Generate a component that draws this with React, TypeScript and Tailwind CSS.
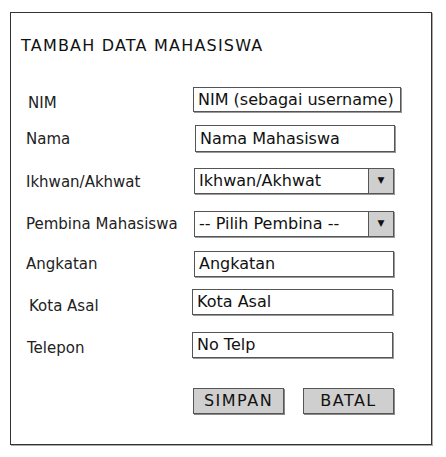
const font = "font-['Comic_Sans_MS','DejaVu_Sans',sans-serif]";

type Row = {
  label: string;
  value: string;
  labelX: number;
  inputX: number;
  inputW: number;
  dy: number;
  mt: number;
  h: number;
  select?: boolean;
};

const rows: Row[] = [
  { label: "NIM", value: "NIM (sebagai username)", labelX: 17, inputX: 182, inputW: 208, dy: 4, mt: 29, h: 25 },
  { label: "Nama", value: "Nama Mahasiswa", labelX: 15, inputX: 184, inputW: 200, dy: 1, mt: 13, h: 27 },
  { label: "Ikhwan/Akhwat", value: "Ikhwan/Akhwat", labelX: 15, inputX: 183, inputW: 200, dy: 1, mt: 16, h: 26, select: true },
  { label: "Pembina Mahasiswa", value: "-- Pilih Pembina --", labelX: 15, inputX: 183, inputW: 200, dy: 0, mt: 17, h: 26, select: true },
  { label: "Angkatan", value: "Angkatan", labelX: 15, inputX: 183, inputW: 200, dy: 0, mt: 14, h: 26 },
  { label: "Kota Asal", value: "Kota Asal", labelX: 18, inputX: 181, inputW: 201, dy: 4, mt: 12, h: 26 },
  { label: "Telepon", value: "No Telp", labelX: 16, inputX: 181, inputW: 201, dy: 3, mt: 17, h: 26 },
];

function FormRow({ row }: { row: Row }) {
  return (
    <div className="flex items-center" style={{ marginTop: row.mt, height: row.h }}>
      <div
        className="shrink-0 text-[15px] text-[#222] whitespace-nowrap"
        style={{ paddingLeft: row.labelX, width: row.inputX, paddingTop: row.dy * 2 }}
      >
        {row.label}
      </div>
      <div
        className="flex h-full items-stretch border border-[#555] bg-white shadow-[1px_1px_0_#999]"
        style={{ width: row.inputW }}
      >
        <span className="flex flex-1 items-center pl-[4px] text-[16px] text-[#111] whitespace-nowrap overflow-hidden">
          {row.value}
        </span>
        {row.select && (
          <span className="flex w-[25px] items-center justify-center border-l border-[#555] bg-[#cfcfcf] text-[9px] text-[#111]">
            ▼
          </span>
        )}
      </div>
    </div>
  );
}

export default function App() {
  return (
    <div className={`w-[446px] h-[457px] bg-white pt-[12px] pl-[10px] ${font}`}>
      <div className="w-[422px] h-[433px] border border-[#333] shadow-[1px_1px_0_#aaa] flex flex-col">
        <h1 className="mt-[21px] pl-[10px] text-[16px] leading-[24px] tracking-[1.2px] text-[#111]">
          TAMBAH DATA MAHASISWA
        </h1>

        {rows.map((r) => (
          <FormRow key={r.label} row={r} />
        ))}

        {/* tombol */}
        <div className="mt-[30px] flex h-[26px] pl-[182px] gap-[19px]">
          <button className="w-[91px] h-full border border-[#555] bg-[#cfcfcf] shadow-[1px_1px_0_#888] text-[16px] text-[#111] tracking-[1.5px]">
            SIMPAN
          </button>
          <button className="w-[91px] h-full border border-[#555] bg-[#cfcfcf] shadow-[1px_1px_0_#888] text-[16px] text-[#111] tracking-[1.5px]">
            BATAL
          </button>
        </div>
      </div>
    </div>
  );
}
